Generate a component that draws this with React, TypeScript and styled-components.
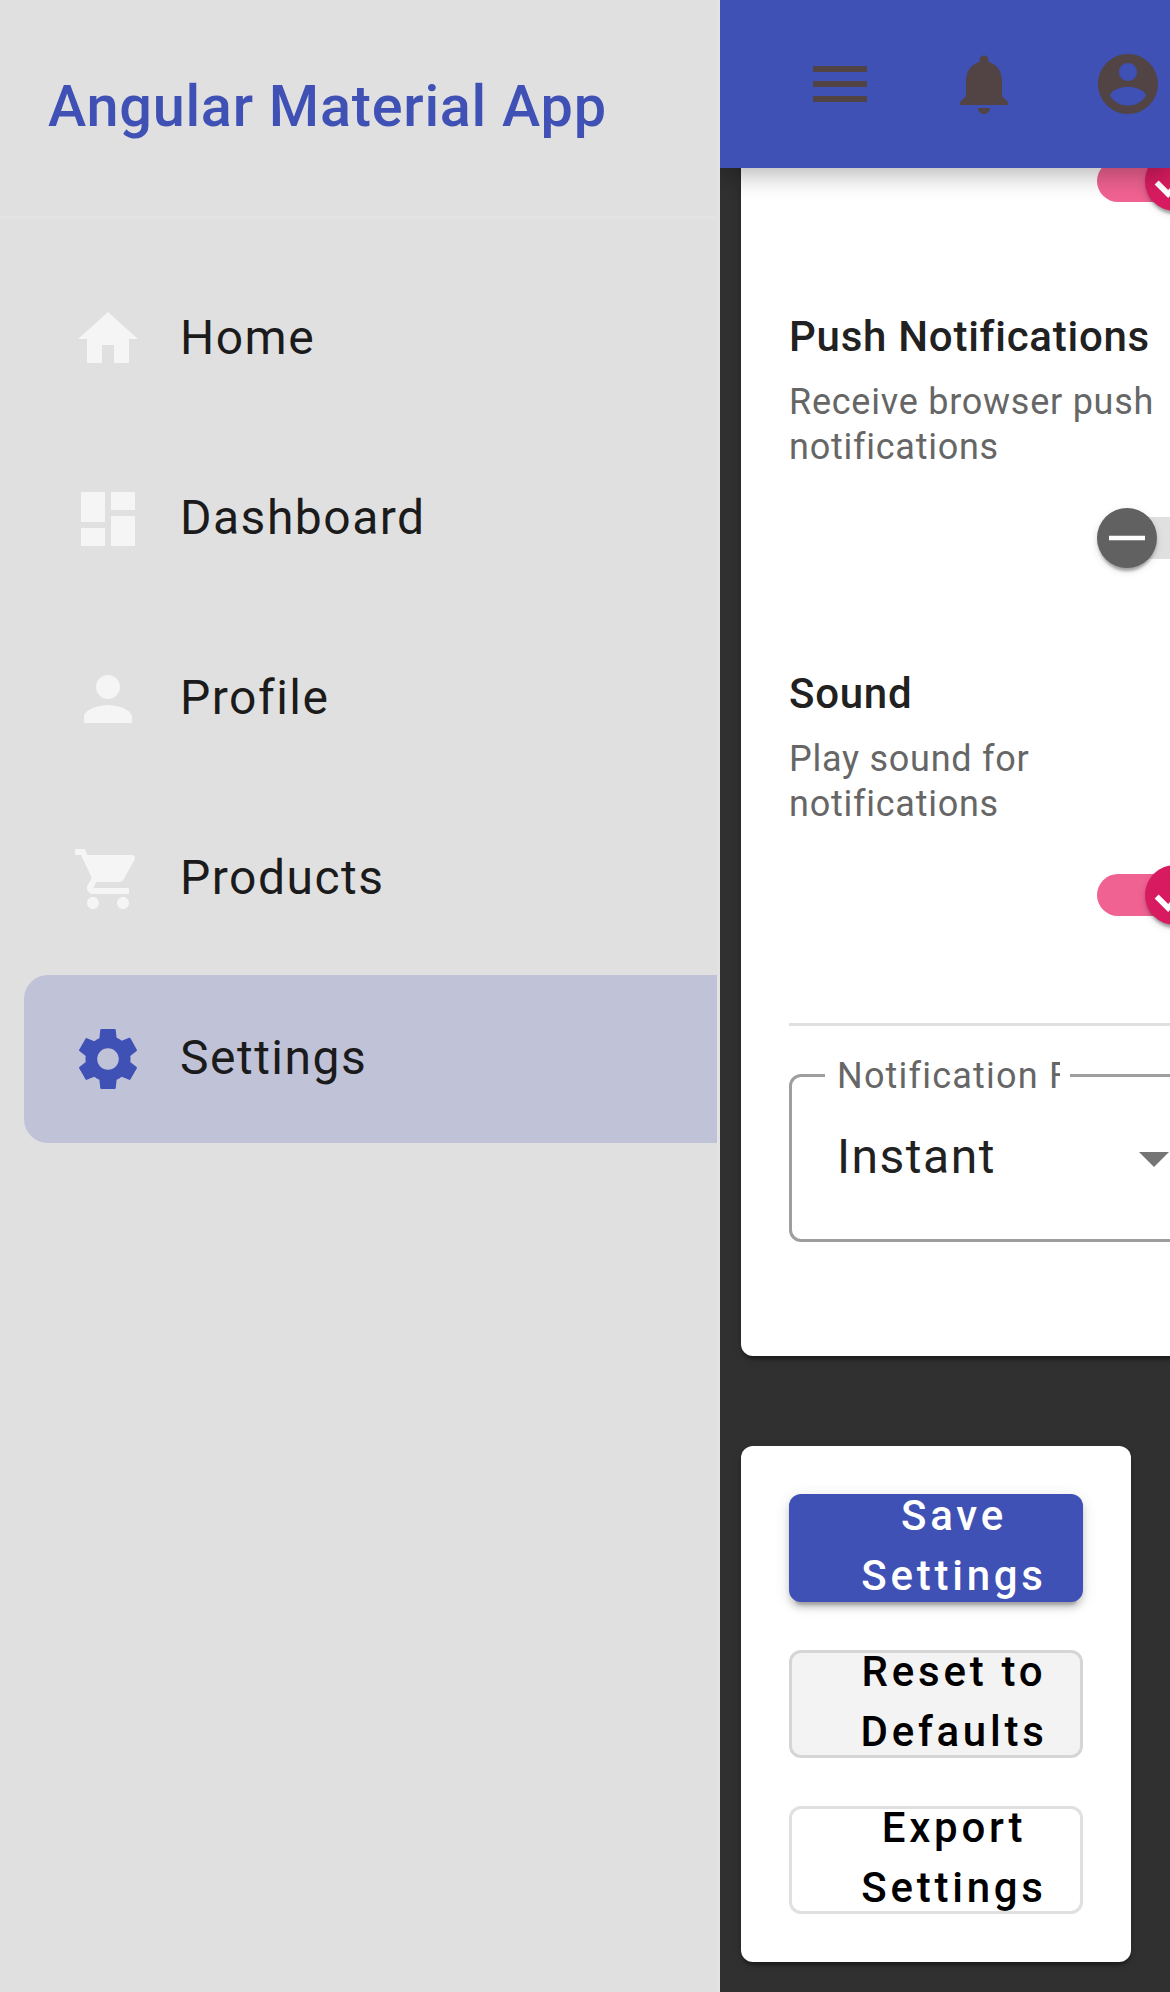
import React from "react";
import styled, { createGlobalStyle, css } from "styled-components";

const GlobalStyle = createGlobalStyle`
  *, *::before, *::after { box-sizing: border-box; }
  html, body { margin: 0; padding: 0; overflow: hidden; background: #303030; }
  body { font-family: Roboto, "Liberation Sans", sans-serif; }
  h1, h3, p { margin: 0; }
`;

const Shell = styled.div`
  display: flex;
  width: 1170px;
  height: 1992px;
  overflow: hidden;
  background: #303030;
`;

const Sidenav = styled.aside`
  flex: none;
  width: 720px;
  overflow: hidden;
  background: #e0e0e0;
  border-right: 3px solid #e3e3e3;
`;

const Brand = styled.header`
  height: 219px;
  padding: 71px 48px 0;
  border-bottom: 3px solid #e3e3e3;
`;

const BrandTitle = styled.h1`
  color: #3f51b5;
  font-size: 57.6px;
  font-weight: 500;
  line-height: 72px;
  letter-spacing: 0.75px;
  white-space: nowrap;
`;

const NavList = styled.nav`
  display: flex;
  flex-direction: column;
  gap: 12px;
  width: 780px;
  padding: 36px 24px;
`;

const NavItem = styled.a<{ $active?: boolean }>`
  display: flex;
  align-items: center;
  gap: 36px;
  height: 168px;
  padding: 0 48px;
  border-radius: 24px;
  color: ${(p) => (p.$active ? "#3f51b5" : "#f5f5f5")};
  background: ${(p) => (p.$active ? "#c0c2d8" : "transparent")};
`;

const NavLabel = styled.span`
  margin-bottom: 3px;
  color: #1b1b1b;
  font-size: 48px;
  line-height: 72px;
  letter-spacing: 1.5px;
`;

const Glyph = styled.svg`
  display: block;
  flex: none;
  width: 72px;
  height: 72px;
  fill: currentColor;
`;

const Main = styled.main`
  display: flex;
  flex-direction: column;
  flex: none;
  width: 450px;
  height: 1992px;
  overflow: hidden;
`;

const Toolbar = styled.header`
  position: relative;
  z-index: 2;
  display: flex;
  align-items: center;
  flex: none;
  height: 168px;
  padding-left: 48px;
  background: #3f51b5;
  box-shadow: 0 6px 24px rgba(0, 0, 0, 0.3);
`;

const ToolButton = styled.button`
  display: flex;
  align-items: center;
  justify-content: center;
  flex: none;
  width: 144px;
  height: 144px;
  padding: 0;
  border: 0;
  background: none;
  color: #524345;
`;

const Content = styled.div`
  display: flex;
  flex-direction: column;
  align-items: flex-start;
  flex: 1;
  gap: 90px;
  min-height: 0;
  padding-left: 21px;
`;

const cardShadow = css`
  box-shadow: 0 6px 3px -3px rgba(0, 0, 0, 0.2), 0 3px 3px rgba(0, 0, 0, 0.14),
    0 3px 9px rgba(0, 0, 0, 0.12);
`;

const SettingsCard = styled.section`
  flex: none;
  width: 520px;
  margin-top: -17px;
  padding: 0 48px 114px;
  border-radius: 0 0 12px 12px;
  background: #fff;
  ${cardShadow}
`;

const Option = styled.div`
  display: flex;
  flex-direction: column;
  margin-bottom: 102px;
`;

const OptionTitle = styled.h3`
  margin-bottom: 19px;
  color: #212121;
  font-size: 42px;
  font-weight: 500;
  line-height: 48px;
  letter-spacing: 0.75px;
  white-space: nowrap;
`;

const OptionHint = styled.p`
  margin-bottom: 38px;
  color: #666;
  font-size: 36px;
  line-height: 45px;
  letter-spacing: 0.75px;
`;

const SwitchRoot = styled.div`
  display: flex;
  align-items: center;
  width: 108px;
  height: 60px;
  margin-left: 308px;
`;

const SwitchTrack = styled.div<{ $on: boolean }>`
  display: flex;
  align-items: center;
  justify-content: ${(p) => (p.$on ? "flex-end" : "flex-start")};
  width: 108px;
  height: 42px;
  border-radius: 21px;
  background: ${(p) => (p.$on ? "#f06292" : "#e0e0e0")};
`;

const SwitchThumb = styled.div<{ $on: boolean }>`
  display: flex;
  align-items: center;
  justify-content: center;
  flex: none;
  width: 60px;
  height: 60px;
  border-radius: 50%;
  background: ${(p) => (p.$on ? "#d81b60" : "#616161")};
  ${cardShadow}
`;

const SwitchGlyph = styled.svg`
  width: 54px;
  height: 54px;
  fill: #fff;
`;

const Divider = styled.hr`
  height: 3px;
  margin: -4px 0 48px;
  border: 0;
  background: #e0e0e0;
`;

const SelectField = styled.div`
  position: relative;
  display: flex;
  align-items: center;
  justify-content: space-between;
  height: 168px;
  padding: 0 41px 0 45px;
  border: 3px solid #9e9e9e;
  border-radius: 12px;
`;

const FieldLabel = styled.span`
  position: absolute;
  top: -25px;
  left: 33px;
  display: block;
  width: 245px;
  height: 48px;
  padding: 0 10px 0 12px;
  background: #fff;
`;

const FieldLabelText = styled.span`
  display: block;
  width: 223px;
  overflow: hidden;
  color: #666;
  font-size: 36px;
  line-height: 48px;
  letter-spacing: 1.2px;
  white-space: nowrap;
`;

const SelectValue = styled.span`
  margin-top: -2px;
  color: #212121;
  font-size: 48px;
  line-height: 72px;
  letter-spacing: 1.5px;
`;

const Caret = styled.span`
  width: 0;
  height: 0;
  margin-top: 3px;
  border: 15px solid transparent;
  border-top-color: #757575;
  border-bottom: 0;
`;

const ActionsCard = styled.section`
  display: flex;
  flex-direction: column;
  flex: none;
  gap: 48px;
  width: 390px;
  padding: 48px;
  border-radius: 12px;
  background: #fff;
  ${cardShadow}
`;

const buttonKinds = {
  primary: css`
    border-color: #3f51b5;
    background: #3f51b5;
    color: #fff;
    box-shadow: 0 9px 3px -6px rgba(0, 0, 0, 0.2), 0 6px 6px rgba(0, 0, 0, 0.14),
      0 3px 15px rgba(0, 0, 0, 0.12);
  `,
  muted: css`
    border-color: #d5d5d5;
    background: #f3f3f3;
    color: #000;
  `,
  outline: css`
    border-color: #e0e0e0;
    background: #fff;
    color: #000;
  `,
};

const ActionButton = styled.button<{ $kind: keyof typeof buttonKinds }>`
  display: flex;
  align-items: center;
  justify-content: center;
  width: 294px;
  height: 108px;
  padding: 0 0 4px 36px;
  border: 3px solid;
  border-radius: 12px;
  font-family: inherit;
  font-size: 42px;
  font-weight: 500;
  line-height: 60px;
  letter-spacing: 3.75px;
  text-align: center;
  ${(p) => buttonKinds[p.$kind]}
`;

const ButtonLabel = styled.span`
  display: block;
  flex: none;
  width: 200px;
`;

const paths = {
  home: "M10 20v-6h4v6h5v-8h3L12 3 2 12h3v8z",
  dashboard: "M3 13h8V3H3v10zm0 8h8v-6H3v6zm10 0h8V11h-8v10zm0-18v6h8V3h-8z",
  person:
    "M12 12c2.21 0 4-1.79 4-4s-1.79-4-4-4-4 1.79-4 4 1.79 4 4 4zm0 2c-2.67 0-8 1.34-8 4v2h16v-2c0-2.66-5.33-4-8-4z",
  cart:
    "M7 18c-1.1 0-1.99.9-1.99 2S5.9 22 7 22s2-.9 2-2-.9-2-2-2zM1 2v2h2l3.6 7.59-1.35 2.45c-.16.28-.25.61-.25.96 0 1.1.9 2 2 2h12v-2H7.42c-.14 0-.25-.11-.25-.25l.03-.12.9-1.63h7.45c.75 0 1.41-.41 1.75-1.03l3.58-6.49c.08-.14.12-.31.12-.48 0-.55-.45-1-1-1H5.21l-.94-2H1zm16 16c-1.1 0-1.99.9-1.99 2s.89 2 1.99 2 2-.9 2-2-.9-2-2-2z",
  settings:
    "M19.43 12.98c.04-.32.07-.64.07-.98s-.03-.66-.07-.98l2.11-1.65c.13-.1.17-.22.12-.37L19.5 5.1c-.1-.15-.3-.25-.45-.18l-2.49 1c-.52-.4-1.08-.73-1.69-.98l-.3-2.7c-.02-.16-.15-.24-.3-.24H9.73c-.15 0-.28.08-.3.24l-.3 2.83c-.61.25-1.17.59-1.69.98l-2.49-1c-.2-.07-.35 0-.45.18L2.34 9c-.05.15-.01.27.12.37l2.11 1.65c-.04.32-.07.65-.07.98s.03.66.07.98l-2.11 1.65c-.13.1-.17.22-.12.37l2.16 3.77c.1.18.25.25.45.18l2.49-1c.52.4 1.08.73 1.69.98l.3 2.83c.02.16.15.24.3.24h4.54c.15 0 .28-.08.3-.24l.3-2.83c.61-.25 1.17-.59 1.69-.98l2.49 1c.2.07.35 0 .45-.18L21.66 15c.05-.15.01-.27-.12-.37l-2.11-1.65zM12 15.6c-1.98 0-3.6-1.62-3.6-3.6s1.62-3.6 3.6-3.6 3.6 1.62 3.6 3.6-1.62 3.6-3.6 3.6z",
  menu: "M3 18h18v-2H3v2zm0-5h18v-2H3v2zm0-7v2h18V6H3z",
  bell:
    "M12 22c1.1 0 2-.9 2-2h-4c0 1.1.89 2 2 2zm6-6v-5c0-3.07-1.64-5.64-4.5-6.32V4c0-.83-.67-1.5-1.5-1.5s-1.5.67-1.5 1.5v.68C7.63 5.36 6 7.92 6 11v5l-2 2v1h16v-1l-2-2z",
  account:
    "M12 2C6.48 2 2 6.48 2 12s4.48 10 10 10 10-4.48 10-10S17.52 2 12 2zm0 3c1.66 0 3 1.34 3 3s-1.34 3-3 3-3-1.34-3-3 1.34-3 3-3zm0 14.2c-2.5 0-4.71-1.28-6-3.22.03-1.99 4-3.08 6-3.08 1.99 0 5.97 1.09 6 3.08-1.29 1.94-3.5 3.22-6 3.22z",
};

type IconName = keyof typeof paths;

const Icon = ({ name }: { name: IconName }) => (
  <Glyph viewBox="0 0 24 24" aria-hidden="true">
    <path d={paths[name]} />
  </Glyph>
);

const Switch = ({ on }: { on: boolean }) => (
  <SwitchRoot role="switch" aria-checked={on}>
    <SwitchTrack $on={on}>
      <SwitchThumb $on={on}>
        <SwitchGlyph viewBox="0 0 24 24">
          <path
            d={
              on
                ? "M19.69 5.23 8.96 15.96l-4.23-4.23L2.96 13.5l6 6L21.46 7z"
                : "M20 13H4v-2h16v2z"
            }
          />
        </SwitchGlyph>
      </SwitchThumb>
    </SwitchTrack>
  </SwitchRoot>
);

const navItems: { icon: IconName; label: string; active?: boolean }[] = [
  { icon: "home", label: "Home" },
  { icon: "dashboard", label: "Dashboard" },
  { icon: "person", label: "Profile" },
  { icon: "cart", label: "Products" },
  { icon: "settings", label: "Settings", active: true },
];

const tools: IconName[] = ["menu", "bell", "account"];

const options = [
  { title: "Push Notifications", hint: ["Receive browser push", "notifications"], on: false },
  { title: "Sound", hint: ["Play sound for", "notifications"], on: true },
];

const actions: { lines: [string, string]; kind: keyof typeof buttonKinds }[] = [
  { lines: ["Save", "Settings"], kind: "primary" },
  { lines: ["Reset to", "Defaults"], kind: "muted" },
  { lines: ["Export", "Settings"], kind: "outline" },
];

export default function App() {
  return (
    <>
      <GlobalStyle />
      <Shell>
        <Sidenav>
          <Brand>
            <BrandTitle>Angular Material App</BrandTitle>
          </Brand>
          <NavList>
            {navItems.map((item) => (
              <NavItem key={item.label} $active={item.active}>
                <Icon name={item.icon} />
                <NavLabel>{item.label}</NavLabel>
              </NavItem>
            ))}
          </NavList>
        </Sidenav>
        <Main>
          <Toolbar>
            {tools.map((name) => (
              <ToolButton key={name} aria-label={name}>
                <Icon name={name} />
              </ToolButton>
            ))}
          </Toolbar>
          <Content>
            <SettingsCard>
              <Option>
                <Switch on />
              </Option>
              {options.map((o) => (
                <Option key={o.title}>
                  <OptionTitle>{o.title}</OptionTitle>
                  <OptionHint>
                    {o.hint[0]}
                    <br />
                    {o.hint[1]}
                  </OptionHint>
                  <Switch on={o.on} />
                </Option>
              ))}
              <Divider />
              <SelectField>
                <FieldLabel>
                  <FieldLabelText>Notification Frequency</FieldLabelText>
                </FieldLabel>
                <SelectValue>Instant</SelectValue>
                <Caret />
              </SelectField>
            </SettingsCard>
            <ActionsCard>
              {actions.map((a) => (
                <ActionButton key={a.lines.join(" ")} $kind={a.kind}>
                  <ButtonLabel>
                    {a.lines[0]}
                    <br />
                    {a.lines[1]}
                  </ButtonLabel>
                </ActionButton>
              ))}
            </ActionsCard>
          </Content>
        </Main>
      </Shell>
    </>
  );
}
